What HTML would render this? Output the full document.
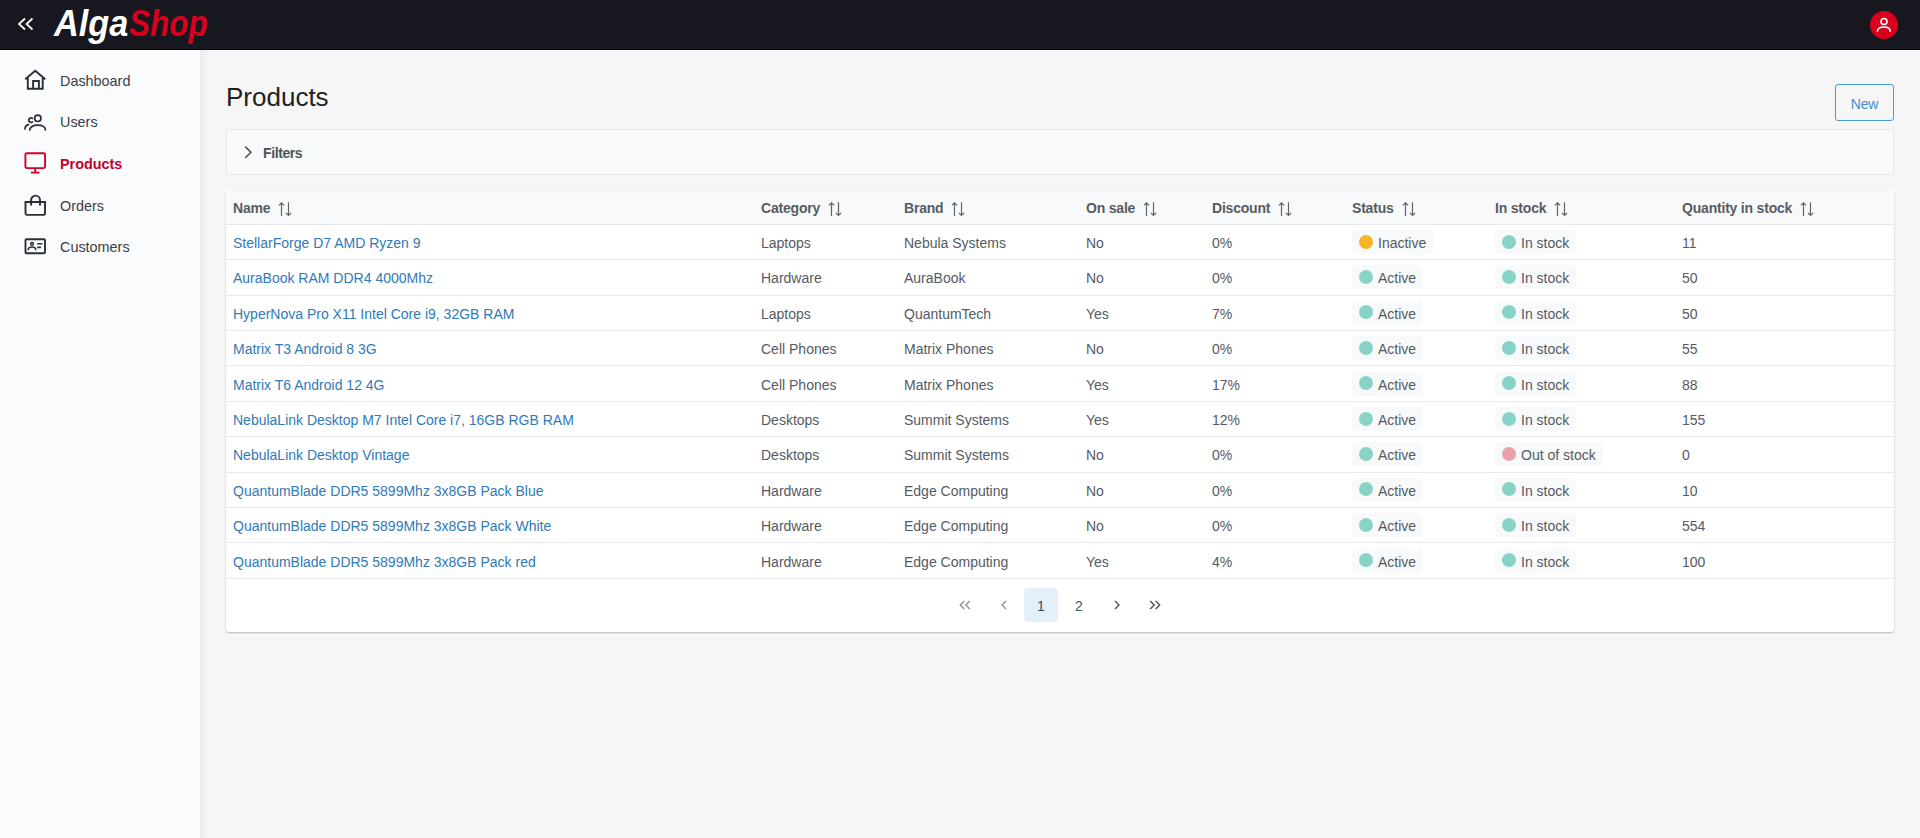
<!DOCTYPE html>
<html><head><meta charset="utf-8">
<style>
*{box-sizing:border-box;margin:0;padding:0}
html,body{width:1920px;height:838px;overflow:hidden;background:#f6f6f6;font-family:"Liberation Sans",sans-serif}
.top{position:absolute;left:0;top:0;width:1920px;height:50px;background:#17171f;border-bottom:1px solid #0a0a0e}
.chev{position:absolute;left:17px;top:17px}
.logo{position:absolute;left:53px;top:-2px;font-size:37.5px;font-weight:bold;font-style:italic;letter-spacing:0;transform:scaleX(0.885);transform-origin:0 0;color:#fff;line-height:50px;white-space:nowrap}
.logo span{color:#d9001e}
.avatar{position:absolute;left:1870px;top:11px;width:28px;height:28px;border-radius:50%;background:#d9001e}
.side{position:absolute;left:0;top:50px;width:200px;height:788px;background:#f9fbfd}
.main-shadow{position:absolute;left:200px;top:50px;width:8px;height:788px;background:linear-gradient(to right,#ececec,#efefef 50%,#f6f6f6)}
.nav{position:absolute;left:0;width:200px;height:30px}
.nav svg{position:absolute;left:24px;top:3px}
.nav .t{position:absolute;left:60px;top:7px;font-size:14.4px;color:#3b3e44;line-height:16px}
.nav.act .t{color:#c4002a;font-weight:bold}
.title{position:absolute;left:226px;top:82px;font-size:26px;color:#212121;line-height:30px}
.newbtn{position:absolute;left:1835px;top:84px;width:59px;height:37px;border:1px solid #4a9ad6;border-radius:3px;color:#3f8fd0;letter-spacing:-0.2px;font-size:14px;text-align:center;line-height:39px;background:transparent}
.filters{position:absolute;left:226px;top:129px;width:1668px;height:46px;background:#f9fafb;border:1px solid #e3e5e8;border-radius:4px}
.filters .t{position:absolute;left:36px;top:15px;font-size:14px;font-weight:bold;color:#4d535a;line-height:16px;letter-spacing:-0.4px}
.filters svg{position:absolute;left:16px;top:15px}
.card{position:absolute;left:226px;top:190px;width:1668px;height:442px;background:#fff;box-shadow:0 1px 2px rgba(0,0,0,.25);border-radius:3px}
table{position:absolute;left:0;top:0;width:1668px;border-collapse:collapse;table-layout:fixed}
th{height:34.4px;padding-top:2px !important;background:#f8f9fa;text-align:left;font-size:14px;font-weight:bold;color:#575c63;padding:0 0 0 7px;letter-spacing:-0.2px;border-bottom:1px solid #e5e7eb;white-space:nowrap}
td{height:35.4px;padding-top:2px !important;font-size:14px;color:#545a63;padding:0 0 0 7px;border-bottom:1px solid #e8e9eb;white-space:nowrap}
td a{color:#2f7ab8;text-decoration:none}
.sort{display:inline-block;vertical-align:-3px;margin-left:8px}
.badge{display:inline-block;height:24px;line-height:26px;background:#f8f9fa;border-radius:4px;padding:0 7px 0 26px;position:relative;top:-1px;margin-left:0}
.badge:before{content:"";position:absolute;left:7px;top:4.5px;width:14px;height:14px;border-radius:50%;background:var(--c)}
.pag{position:absolute;left:0;top:388px;width:1668px;height:54px}
.pg{position:absolute;top:10px;width:34px;height:34px;text-align:center;line-height:36px;font-size:14px;color:#4b5563;border-radius:4px}
.pg.on{background:#e3f0fc;color:#3b4a5a}
</style></head><body>
<div class="top">
  <svg class="chev" width="18" height="14" viewBox="0 0 18 14"><path d="M8 1.5L2 7l6 5.5M15.5 1.5L9.5 7l6 5.5" fill="none" stroke="#fff" stroke-width="1.7"/></svg>
  <div class="logo" style="left:53.7px;transform:scaleX(0.913)">Alga</div><div class="logo" style="left:129.4px;color:#d9001e;transform:scaleX(0.839)">Shop</div>
  <div class="avatar"><svg width="28" height="28" viewBox="0 0 28 28"><circle cx="14" cy="10.5" r="3" fill="none" stroke="#fff" stroke-width="1.6"/><path d="M7.4 20.3c0-2.9 2.8-4.3 6.4-4.3s6.4 1.4 6.4 4.3" fill="none" stroke="#fff" stroke-width="1.6" stroke-linecap="round"/></svg></div>
</div>
<div class="side">
<div class="nav" style="top:16px"><svg width="24" height="24" viewBox="0 0 24 24"><path d="M1.2 10.3L11.25 1.8 21.3 10.3M3.8 8.2V19.7H18.7V8.2M9.1 19.7V12H14.9V19.7" fill="none" stroke="#2b2f36" stroke-width="1.9" stroke-linejoin="miter"/></svg><span class="t">Dashboard</span></div>
<div class="nav" style="top:57px"><svg width="24" height="24" viewBox="0 0 24 24"><circle cx="13.8" cy="8.3" r="3.2" fill="none" stroke="#2b2f36" stroke-width="1.7"/><path d="M5.8 20c0-2.8 3.5-4.8 8-4.8s7.6 2 7.6 4.8" fill="none" stroke="#2b2f36" stroke-width="1.7" stroke-linecap="round"/><path d="M8.4 8.4A2.2 2.2 0 1 0 8.4 11.8M1 19c0-2.2 1.2-3.8 3.4-4.4" fill="none" stroke="#2b2f36" stroke-width="1.7" stroke-linecap="round"/></svg><span class="t">Users</span></div>
<div class="nav act" style="top:99px"><svg width="24" height="24" viewBox="0 0 24 24"><rect x="1.4" y="1.3" width="19.7" height="14.8" rx="1.5" fill="none" stroke="#d0002a" stroke-width="1.9"/><path d="M11.25 16.1v4.4M7 20.6h8.5" fill="none" stroke="#d0002a" stroke-width="1.9"/></svg><span class="t">Products</span></div>
<div class="nav" style="top:141px"><svg width="24" height="24" viewBox="0 0 24 24"><path d="M1.5 8h19.5v11a1.9 1.9 0 0 1-1.9 1.9H3.4A1.9 1.9 0 0 1 1.5 19z" fill="none" stroke="#2b2f36" stroke-width="1.9"/><path d="M7.1 11.6V6.1a4.45 4.45 0 0 1 8.9 0V11.6" fill="none" stroke="#2b2f36" stroke-width="1.9"/></svg><span class="t">Orders</span></div>
<div class="nav" style="top:182px"><svg width="24" height="24" viewBox="0 0 24 24"><rect x="1.5" y="4.2" width="19.5" height="14.1" rx="1" fill="none" stroke="#2b2f36" stroke-width="1.9"/><circle cx="8" cy="8.8" r="1.4" fill="none" stroke="#2b2f36" stroke-width="1.5"/><path d="M4.2 15.2c0-1.9 1.7-3.2 3.8-3.2s3.8 1.3 3.8 3.2M13.2 8.8h5.2M13.2 12.4h3.8" fill="none" stroke="#2b2f36" stroke-width="1.6"/></svg><span class="t">Customers</span></div>
</div>
<div class="main-shadow"></div>
<div class="title">Products</div>
<div class="newbtn">New</div>
<div class="filters"><svg width="10" height="16" viewBox="0 0 10 16"><path d="M2.2 1.6L7.9 7.3 2.2 13" fill="none" stroke="#495057" stroke-width="1.6"/></svg><span class="t">Filters</span></div>
<div class="card"><table><colgroup><col style="width:528px"><col style="width:143px"><col style="width:182px"><col style="width:126px"><col style="width:140px"><col style="width:143px"><col style="width:187px"><col style="width:219px"></colgroup>
<tr><th>Name<svg class="sort" width="14" height="14" viewBox="0 0 14 14"><path d="M3.5 14V0.8M0.9 3.4L3.5 0.8l2.6 2.6M10.5 0.2v13.2M7.9 10.8l2.6 2.6 2.6-2.6" fill="none" stroke="#5f656c" stroke-width="1.2"/></svg></th><th>Category<svg class="sort" width="14" height="14" viewBox="0 0 14 14"><path d="M3.5 14V0.8M0.9 3.4L3.5 0.8l2.6 2.6M10.5 0.2v13.2M7.9 10.8l2.6 2.6 2.6-2.6" fill="none" stroke="#5f656c" stroke-width="1.2"/></svg></th><th>Brand<svg class="sort" width="14" height="14" viewBox="0 0 14 14"><path d="M3.5 14V0.8M0.9 3.4L3.5 0.8l2.6 2.6M10.5 0.2v13.2M7.9 10.8l2.6 2.6 2.6-2.6" fill="none" stroke="#5f656c" stroke-width="1.2"/></svg></th><th>On sale<svg class="sort" width="14" height="14" viewBox="0 0 14 14"><path d="M3.5 14V0.8M0.9 3.4L3.5 0.8l2.6 2.6M10.5 0.2v13.2M7.9 10.8l2.6 2.6 2.6-2.6" fill="none" stroke="#5f656c" stroke-width="1.2"/></svg></th><th>Discount<svg class="sort" width="14" height="14" viewBox="0 0 14 14"><path d="M3.5 14V0.8M0.9 3.4L3.5 0.8l2.6 2.6M10.5 0.2v13.2M7.9 10.8l2.6 2.6 2.6-2.6" fill="none" stroke="#5f656c" stroke-width="1.2"/></svg></th><th>Status<svg class="sort" width="14" height="14" viewBox="0 0 14 14"><path d="M3.5 14V0.8M0.9 3.4L3.5 0.8l2.6 2.6M10.5 0.2v13.2M7.9 10.8l2.6 2.6 2.6-2.6" fill="none" stroke="#5f656c" stroke-width="1.2"/></svg></th><th>In stock<svg class="sort" width="14" height="14" viewBox="0 0 14 14"><path d="M3.5 14V0.8M0.9 3.4L3.5 0.8l2.6 2.6M10.5 0.2v13.2M7.9 10.8l2.6 2.6 2.6-2.6" fill="none" stroke="#5f656c" stroke-width="1.2"/></svg></th><th>Quantity in stock<svg class="sort" width="14" height="14" viewBox="0 0 14 14"><path d="M3.5 14V0.8M0.9 3.4L3.5 0.8l2.6 2.6M10.5 0.2v13.2M7.9 10.8l2.6 2.6 2.6-2.6" fill="none" stroke="#5f656c" stroke-width="1.2"/></svg></th></tr>
<tr><td><a>StellarForge D7 AMD Ryzen 9</a></td><td>Laptops</td><td>Nebula Systems</td><td>No</td><td>0%</td><td><span class="badge" style="--c:#f6b42a">Inactive</span></td><td><span class="badge" style="--c:#87d3c7">In stock</span></td><td>11</td></tr>
<tr><td><a>AuraBook RAM DDR4 4000Mhz</a></td><td>Hardware</td><td>AuraBook</td><td>No</td><td>0%</td><td><span class="badge" style="--c:#87d3c7">Active</span></td><td><span class="badge" style="--c:#87d3c7">In stock</span></td><td>50</td></tr>
<tr><td><a>HyperNova Pro X11 Intel Core i9, 32GB RAM</a></td><td>Laptops</td><td>QuantumTech</td><td>Yes</td><td>7%</td><td><span class="badge" style="--c:#87d3c7">Active</span></td><td><span class="badge" style="--c:#87d3c7">In stock</span></td><td>50</td></tr>
<tr><td><a>Matrix T3 Android 8 3G</a></td><td>Cell Phones</td><td>Matrix Phones</td><td>No</td><td>0%</td><td><span class="badge" style="--c:#87d3c7">Active</span></td><td><span class="badge" style="--c:#87d3c7">In stock</span></td><td>55</td></tr>
<tr><td><a>Matrix T6 Android 12 4G</a></td><td>Cell Phones</td><td>Matrix Phones</td><td>Yes</td><td>17%</td><td><span class="badge" style="--c:#87d3c7">Active</span></td><td><span class="badge" style="--c:#87d3c7">In stock</span></td><td>88</td></tr>
<tr><td><a>NebulaLink Desktop M7 Intel Core i7, 16GB RGB RAM</a></td><td>Desktops</td><td>Summit Systems</td><td>Yes</td><td>12%</td><td><span class="badge" style="--c:#87d3c7">Active</span></td><td><span class="badge" style="--c:#87d3c7">In stock</span></td><td>155</td></tr>
<tr><td><a>NebulaLink Desktop Vintage</a></td><td>Desktops</td><td>Summit Systems</td><td>No</td><td>0%</td><td><span class="badge" style="--c:#87d3c7">Active</span></td><td><span class="badge" style="--c:#eca0aa">Out of stock</span></td><td>0</td></tr>
<tr><td><a>QuantumBlade DDR5 5899Mhz 3x8GB Pack Blue</a></td><td>Hardware</td><td>Edge Computing</td><td>No</td><td>0%</td><td><span class="badge" style="--c:#87d3c7">Active</span></td><td><span class="badge" style="--c:#87d3c7">In stock</span></td><td>10</td></tr>
<tr><td><a>QuantumBlade DDR5 5899Mhz 3x8GB Pack White</a></td><td>Hardware</td><td>Edge Computing</td><td>No</td><td>0%</td><td><span class="badge" style="--c:#87d3c7">Active</span></td><td><span class="badge" style="--c:#87d3c7">In stock</span></td><td>554</td></tr>
<tr><td><a>QuantumBlade DDR5 5899Mhz 3x8GB Pack red</a></td><td>Hardware</td><td>Edge Computing</td><td>Yes</td><td>4%</td><td><span class="badge" style="--c:#87d3c7">Active</span></td><td><span class="badge" style="--c:#87d3c7">In stock</span></td><td>100</td></tr>
</table>
<div class="pag"><div class="pg" style="left:722px"><svg style="position:absolute;left:11px;top:12px" width="12" height="10" viewBox="0 0 12 10"><path d="M5.3 1L1.3 5l4 4M10.8 1l-4 4 4 4" fill="none" stroke="#8c9298" stroke-width="1.4"/></svg></div><div class="pg" style="left:760.5px"><svg style="position:absolute;left:14px;top:12px" width="6" height="10" viewBox="0 0 6 10"><path d="M5 1L1 5l4 4" fill="none" stroke="#8c9298" stroke-width="1.4"/></svg></div><div class="pg on" style="left:798px">1</div><div class="pg" style="left:836px">2</div><div class="pg" style="left:874px"><svg style="position:absolute;left:14px;top:12px" width="6" height="10" viewBox="0 0 6 10"><path d="M1 1l4 4-4 4" fill="none" stroke="#4d5359" stroke-width="1.4"/></svg></div><div class="pg" style="left:912px"><svg style="position:absolute;left:11px;top:12px" width="12" height="10" viewBox="0 0 12 10"><path d="M1.2 1l4 4-4 4M6.7 1l4 4-4 4" fill="none" stroke="#4d5359" stroke-width="1.4"/></svg></div></div></div>
</body></html>
